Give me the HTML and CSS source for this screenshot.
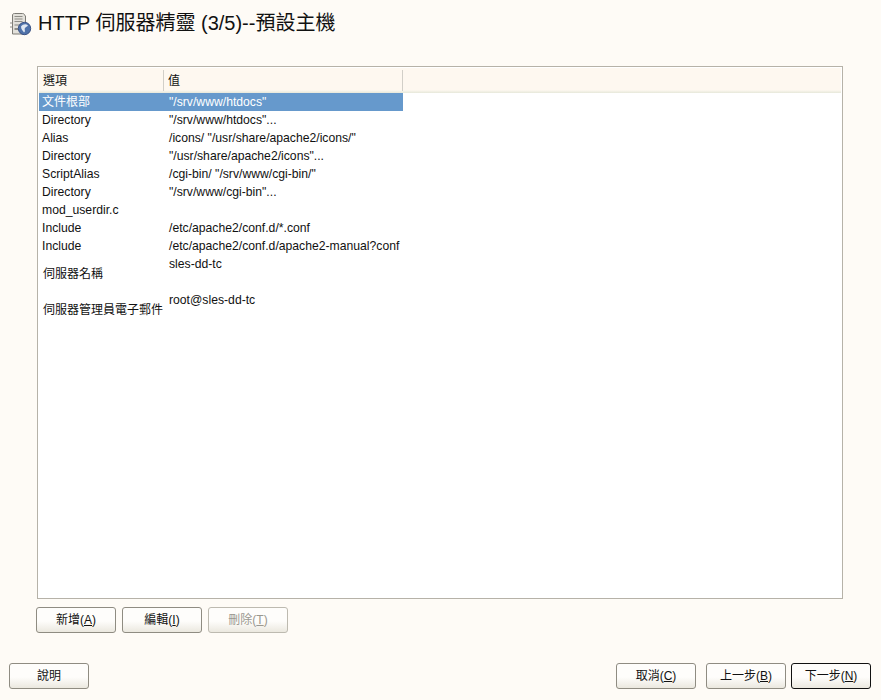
FILE: index.html
```html
<!DOCTYPE html>
<html lang="zh-Hant">
<head>
<meta charset="utf-8">
<title>HTTP 伺服器精靈</title>
<link rel="stylesheet" href="styles.css">
</head>
<body>
<div class="app">
  <header class="title-bar">
    <svg class="title-icon" width="24" height="26" viewBox="0 0 24 26">
      <path d="M3.500 3c0-1 1-1.500 2-1.500h8c1 0 2 .5 2 1.500l1 1v18h-13z" fill="#e3e1db" stroke="#7d7b75"/>
      <path d="M5.500 4.500h8M5.500 7h8M5.500 9.500h8" stroke="#8f8d87" stroke-width="1.200"/>
      <rect x="5.500" y="12" width="8" height="2" fill="#b4b2ac"/>
      <rect x="5.500" y="16" width="4" height="2" fill="#8f8d87"/>
      <path d="M1 11h2.500M1 15h2.500" stroke="#8f8d87"/>
      <circle cx="15.500" cy="16.500" r="6.200" fill="#4f72aa" stroke="#3c5384"/>
      <path d="M12 14.500c2-2.500 5-3 7-1-1 1.500-2 1-3 2.500s1 3-1 4.500c-1-2-3-3-3-6z" fill="#dfe7f2"/>
    </svg>
    <h1 class="title">HTTP 伺服器精靈 (3/5)--預設主機</h1>
  </header>
  <main class="frame">
    <div class="table-head">
      <div class="th th-option cjk">選項</div>
      <div class="th th-value cjk">值</div>
    </div>
    <div class="row selected"><span class="c1 cjk">文件根部</span><span class="c2">"/srv/www/htdocs"</span></div>
    <div class="row"><span class="c1">Directory</span><span class="c2">"/srv/www/htdocs"...</span></div>
    <div class="row"><span class="c1">Alias</span><span class="c2">/icons/ "/usr/share/apache2/icons/"</span></div>
    <div class="row"><span class="c1">Directory</span><span class="c2">"/usr/share/apache2/icons"...</span></div>
    <div class="row"><span class="c1">ScriptAlias</span><span class="c2">/cgi-bin/ "/srv/www/cgi-bin/"</span></div>
    <div class="row"><span class="c1">Directory</span><span class="c2">"/srv/www/cgi-bin"...</span></div>
    <div class="row"><span class="c1">mod_userdir.c</span><span class="c2"></span></div>
    <div class="row"><span class="c1">Include</span><span class="c2">/etc/apache2/conf.d/*.conf</span></div>
    <div class="row"><span class="c1">Include</span><span class="c2">/etc/apache2/conf.d/apache2-manual?conf</span></div>
    <div class="row tall"><span class="c1 cjk">伺服器名稱</span><span class="c2">sles-dd-tc</span></div>
    <div class="row tall"><span class="c1 cjk">伺服器管理員電子郵件</span><span class="c2">root@sles-dd-tc</span></div>
  </main>
  <div class="table-actions">
    <button class="btn">新增(<u>A</u>)</button>
    <button class="btn">編輯(<u>I</u>)</button>
    <button class="btn" disabled>刪除(<u>T</u>)</button>
  </div>
  <footer class="footer">
    <button class="btn">說明</button>
    <div class="footer-right">
      <button class="btn cancel">取消(<u>C</u>)</button>
      <button class="btn back">上一步(<u>B</u>)</button>
      <button class="btn primary">下一步(<u>N</u>)</button>
    </div>
  </footer>
</div>
</body>
</html>
```
FILE: styles.css
```css
* { box-sizing: border-box; }
html, body { margin: 0; height: 100%; }
body {
  background: #fefbf6;
  color: #111;
  font-family: "Liberation Sans", "Noto Sans CJK TC", sans-serif;
  font-size: 12px;
  overflow: hidden;
}
.app { width: 881px; height: 700px; display: flex; flex-direction: column; }
.title-bar { height: 66px; padding: 11px 0 0 9px; display: flex; align-items: flex-start; gap: 5px; }
.title-icon { flex: none; margin-top: 1px; }
.title { margin: 0; font-size: 20px; line-height: 24px; font-weight: 400; color: #111; }
.frame {
  margin: 0 38px 0 37px;
  height: 533px;
  border: 1px solid #b6b2a8;
  background: #fff;
  padding: 1px;
}
.table-head { display: flex; height: 25px; align-items: center; background: linear-gradient(#fef8f0 88%, #e6e8da); width: 100%; }
.th { height: 21px; line-height: 23px; padding-left: 4px; }
.th-option { width: 125px; border-right: 1px solid #d2cfc8; }
.th-value { width: 239px; border-right: 1px solid #d2cfc8; }
.row { display: flex; width: 364px; height: 18px; line-height: 18px; font-size: 12.2px; }
.cjk { font-size: 12px; }
.c1 { width: 126px; padding-left: 3px; white-space: nowrap; flex: none; }
.c2 { padding-left: 4px; white-space: nowrap; flex: none; width: 238px; overflow: hidden; }
.selected { background: #6699cc; color: #fff; }
.row.tall { height: 36px; }
.row.tall .c1 { line-height: 38px; padding-left: 4px; }
.table-actions { display: flex; gap: 6px; padding: 8px 0 0 36px; }
.btn {
  width: 80px;
  height: 26px;
  padding: 0 0 3px;
  border: 1px solid #8f8c82;
  border-radius: 3px;
  background: linear-gradient(#fefdfb 55%, #ebe8df);
  color: #111;
  font: inherit;
}
.btn u { text-underline-offset: 1px; }
.btn:disabled { color: #9a9890; border-color: #bdbab0; }
.footer { display: flex; justify-content: space-between; padding: 30px 10px 0 9px; }
.footer-right { display: flex; }
.back { margin-left: 10px; }
.primary { margin-left: 5px; border-color: #111; }
```
